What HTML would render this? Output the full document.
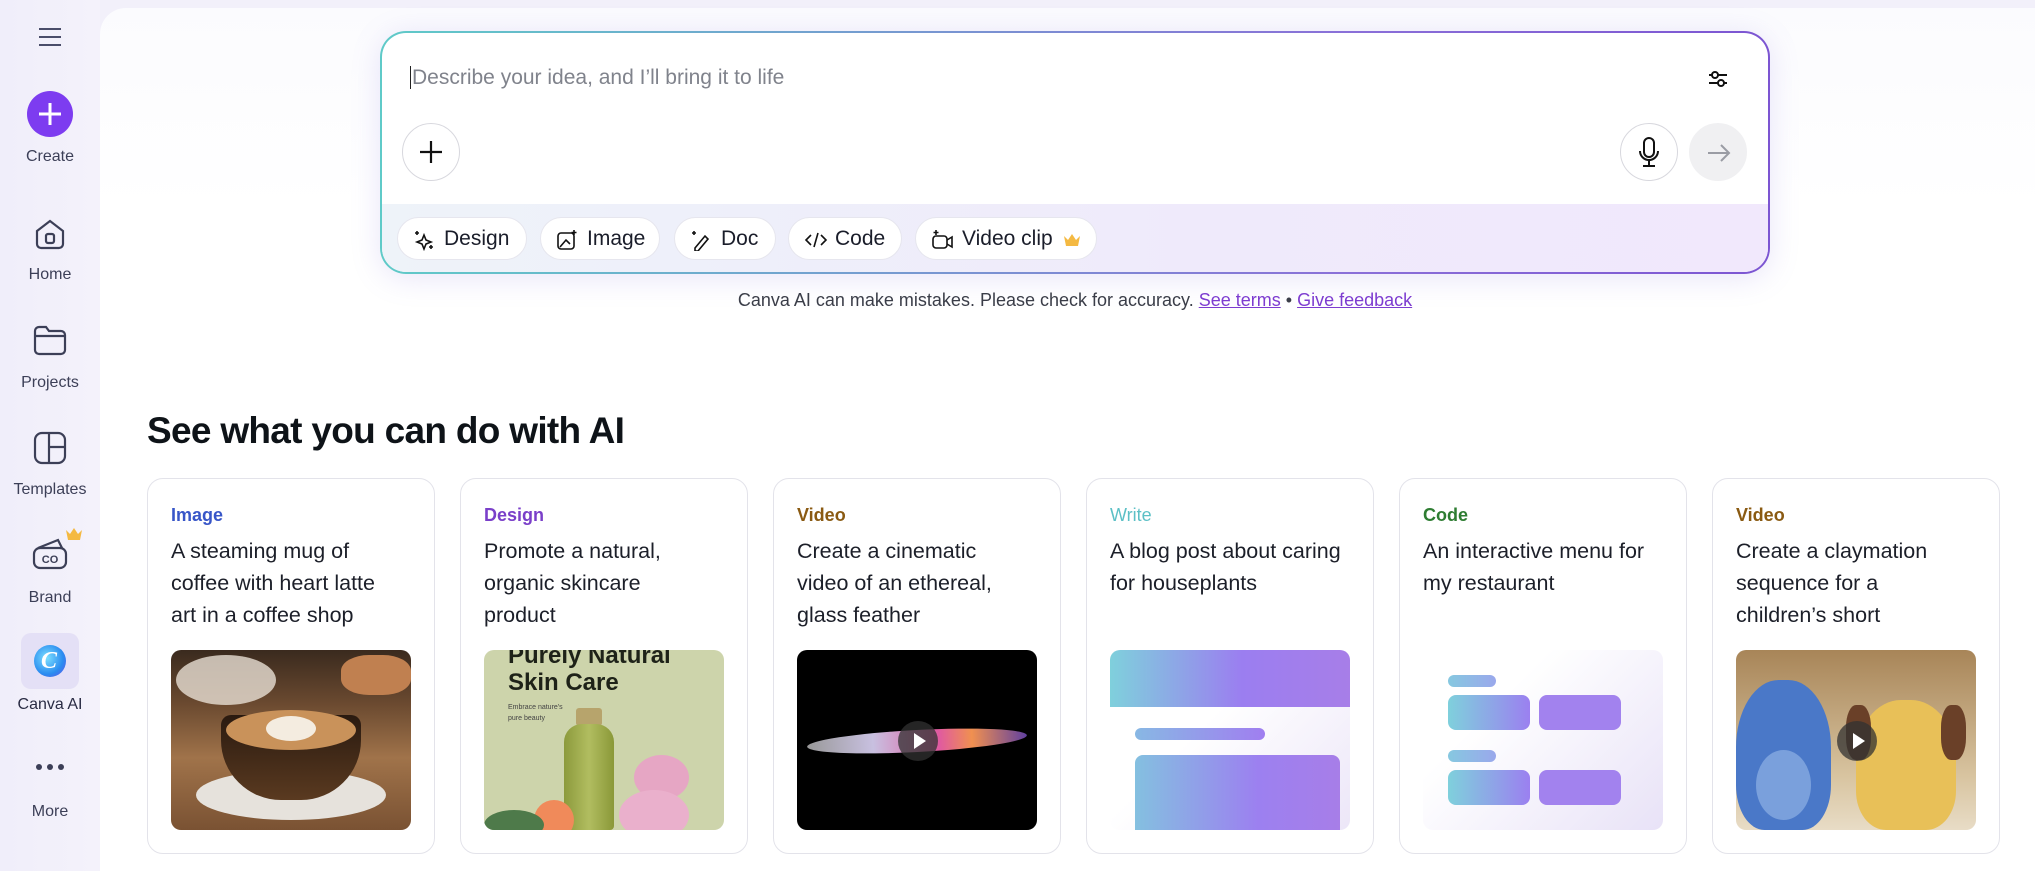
<!DOCTYPE html>
<html><head><meta charset="utf-8">
<style>
*{box-sizing:border-box;margin:0;padding:0}
body{width:2035px;height:871px;overflow:hidden;background:#f2f0fa;font-family:"Liberation Sans",sans-serif;color:#0e1318;position:relative}
.side{position:absolute;left:0;top:0;width:100px;height:871px;background:linear-gradient(90deg,#f0eefa,#f4f2fb)}
.nav{position:absolute;left:0;width:100px;text-align:center;font-size:16px;color:#3c3f57}
.ico{position:absolute;left:50%;transform:translateX(-50%)}
.main{position:absolute;left:100px;top:8px;width:1935px;height:863px;background:linear-gradient(180deg,#fbfbfe 0,#fff 200px);border-top-left-radius:26px}
.prompt{position:absolute;left:380px;top:31px;width:1390px;height:243px;border-radius:26px;padding:2px;background:linear-gradient(90deg,#5fcac8,#8a6fd8 70%,#7c55d2);box-shadow:0 4px 30px rgba(130,110,220,.18)}
.pin{position:absolute;inset:2px;border-radius:24px;background:#fff;overflow:hidden}
.chipbar{position:absolute;left:0;right:0;top:171px;bottom:0;background:linear-gradient(90deg,#eef3f9,#efeafb 60%,#f1e8fc)}
.chip{position:absolute;top:13px;height:43px;border-radius:22px;background:#fff;border:1px solid #e6e6ee;font-size:21px;line-height:41px;padding-left:46px;color:#1a1d2a}
.chip svg{position:absolute;left:15px;top:11px}
.circ{position:absolute;width:58px;height:58px;border-radius:50%;border:1px solid #d8d8de;background:#fff}
.card{position:absolute;top:478px;width:288px;height:376px;border:1px solid #e3e3ea;border-radius:16px;background:#fff}
.cat{position:absolute;left:23px;top:26px;font-size:18px;font-weight:bold}
.desc{position:absolute;left:23px;top:56px;width:232px;font-size:21.5px;line-height:32px;color:#1c1f29}
.img{position:absolute;left:23px;top:171px;width:240px;height:180px;border-radius:10px;overflow:hidden}
.play{position:absolute;left:101px;top:71px;width:40px;height:40px;border-radius:50%;background:rgba(50,50,50,.75)}
.play:after{content:"";position:absolute;left:16px;top:12px;border-left:12px solid #fff;border-top:8px solid transparent;border-bottom:8px solid transparent}
</style></head><body>
<div class="side">
  <svg class="ico" style="top:26px" width="26" height="22"><path d="M2 3h22M2 11h22M2 19h22" stroke="#4a4d6a" stroke-width="2"/></svg>
  <div class="ico" style="top:91px;width:46px;height:46px;border-radius:50%;background:#7d3cf0"><svg width="46" height="46"><path d="M23 12v22M12 23h22" stroke="#fff" stroke-width="3"/></svg></div>
  <div class="nav" style="top:148px">Create</div>
  <svg class="ico" style="top:216px" width="36" height="36" viewBox="0 0 36 36"><path d="M5 15l13-10 13 10v13a4 4 0 0 1-4 4H9a4 4 0 0 1-4-4z" fill="none" stroke="#3c3f57" stroke-width="2.2"/><rect x="14" y="18" width="8" height="9" rx="2" fill="none" stroke="#3c3f57" stroke-width="2.2"/></svg>
  <div class="nav" style="top:266px">Home</div>
  <svg class="ico" style="top:323px" width="36" height="34" viewBox="0 0 36 34"><path d="M3 8a4 4 0 0 1 4-4h7l3 4h12a4 4 0 0 1 4 4v15a4 4 0 0 1-4 4H7a4 4 0 0 1-4-4z M3 13h30" fill="none" stroke="#3c3f57" stroke-width="2.2"/></svg>
  <div class="nav" style="top:374px">Projects</div>
  <svg class="ico" style="top:430px" width="36" height="36" viewBox="0 0 36 36"><rect x="3" y="3" width="30" height="30" rx="7" fill="none" stroke="#3c3f57" stroke-width="2.2"/><path d="M17 3v30M17 17h16" stroke="#3c3f57" stroke-width="2.2"/></svg>
  <div class="nav" style="top:481px">Templates</div>
  <svg class="ico" style="top:527px;left:74px" width="18" height="14"><path d="M1 3l4 4 4-6 4 6 4-4-2 10H3z" fill="#f4b942"/></svg>
  <svg class="ico" style="top:536px" width="38" height="36" viewBox="0 0 38 36"><rect x="3" y="12" width="32" height="20" rx="6" fill="none" stroke="#3c3f57" stroke-width="2.2"/><path d="M7 12l20-8 4 8" fill="none" stroke="#3c3f57" stroke-width="2.2"/><text x="19" y="27" font-size="11" font-family="Liberation Sans" text-anchor="middle" fill="#3c3f57" font-weight="bold">CO</text></svg>
  <div class="nav" style="top:589px">Brand</div>
  <div class="ico" style="top:633px;width:58px;height:56px;border-radius:10px;background:#e4e0f6"></div>
  <div class="ico" style="top:645px;width:32px;height:32px;border-radius:50%;background:radial-gradient(circle at 40% 40%,#7de0ff,#2a8cf0 60%,#6a4ce8)"><div style="position:absolute;left:7px;top:3px;font:bold italic 24px 'Liberation Serif',serif;color:#fff">C</div></div>
  <div class="nav" style="top:696px;color:#2a2c44">Canva AI</div>
  <svg class="ico" style="top:763px" width="30" height="8"><circle cx="4" cy="4" r="3" fill="#3c3f57"/><circle cx="15" cy="4" r="3" fill="#3c3f57"/><circle cx="26" cy="4" r="3" fill="#3c3f57"/></svg>
  <div class="nav" style="top:803px">More</div>
</div>
<div class="main"></div>

<div class="prompt"><div class="pin">
  <div style="position:absolute;left:28px;top:33px;font-size:21px;color:#80838c"><span style="border-left:1.5px solid #222;margin-right:1px"></span>Describe your idea, and I’ll bring it to life</div>
  <svg style="position:absolute;left:1324px;top:34px" width="24" height="24" viewBox="0 0 24 24"><path d="M3 8h18M3 16h18" stroke="#111" stroke-width="2"/><circle cx="9" cy="8" r="3" fill="#fff" stroke="#111" stroke-width="2"/><circle cx="15" cy="16" r="3" fill="#fff" stroke="#111" stroke-width="2"/></svg>
  <div class="circ" style="left:20px;top:90px"><svg width="58" height="58"><path d="M28 17v22M17 28h22" stroke="#111" stroke-width="2.2"/></svg></div>
  <div class="circ" style="left:1238px;top:90px"><svg width="58" height="58"><rect x="23" y="14" width="10" height="19" rx="5" fill="none" stroke="#111" stroke-width="2"/><path d="M19 27a9 9 0 0 0 18 0M28 36v6M22 42h12" fill="none" stroke="#111" stroke-width="2"/></svg></div>
  <div class="circ" style="left:1307px;top:90px;background:#f0f0f2;border-color:#f0f0f2"><svg width="58" height="58"><path d="M18 29h21M31 21l8 8-8 8" fill="none" stroke="#9a9ca4" stroke-width="2"/></svg></div>
  <div class="chipbar">
    <div class="chip" style="left:15px;width:130px"><svg width="22" height="22"><path d="M11 6l2 5 5 2-5 2-2 5-2-5-5-2 5-2z M4 2v4M2 4h4 M18 16v4M16 18h4" fill="none" stroke="#111" stroke-width="1.6"/></svg>Design</div>
    <div class="chip" style="left:158px;width:120px"><svg width="22" height="22"><rect x="2" y="4" width="16" height="16" rx="3" fill="none" stroke="#111" stroke-width="1.6"/><path d="M4 18l6-7 4 4M18 1v5M15.5 3.5h5" fill="none" stroke="#111" stroke-width="1.6"/></svg>Image</div>
    <div class="chip" style="left:292px;width:102px"><svg width="22" height="22"><path d="M5 19l10-12 3 3-10 12H5z M2 4h4M4 2v4" fill="none" stroke="#111" stroke-width="1.6"/></svg>Doc</div>
    <div class="chip" style="left:406px;width:114px"><svg width="24" height="22"><path d="M7 6l-5 5 5 5M17 6l5 5-5 5M14 4l-4 14" fill="none" stroke="#111" stroke-width="1.6"/></svg>Code</div>
    <div class="chip" style="left:533px;width:182px"><svg width="24" height="22"><rect x="2" y="7" width="14" height="12" rx="3" fill="none" stroke="#111" stroke-width="1.6"/><path d="M16 11l5-3v10l-5-3M5 1v5M2.5 3.5h5" fill="none" stroke="#111" stroke-width="1.6"/></svg>Video clip <svg style="position:static;vertical-align:-2px;margin-left:4px" width="18" height="14"><path d="M1 3l4 4 4-6 4 6 4-4-2 10H3z" fill="#f4b942"/></svg></div>
  </div>
</div></div>

<div style="position:absolute;left:0;width:2150px;top:290px;text-align:center;font-size:18px;color:#3a3d48">Canva AI can make mistakes. Please check for accuracy. <span style="color:#7d3cd0;text-decoration:underline">See terms</span> • <span style="color:#7d3cd0;text-decoration:underline">Give feedback</span></div>

<div style="position:absolute;left:147px;top:410px;font-size:37px;font-weight:bold;letter-spacing:-0.7px;color:#0e1318">See what you can do with AI</div>

<div class="card" style="left:147px"><div class="cat" style="color:#3856c8">Image</div><div class="desc">A steaming mug of coffee with heart latte art in a coffee shop</div>
<div class="img" style="background:linear-gradient(180deg,#3a2a1e 0,#6b4a30 30%,#a0734a 60%,#7a5233)">
<div style="position:absolute;width:100px;height:50px;border-radius:50%;background:#e8e0d4;opacity:.8;left:5px;top:5px"></div>
<div style="position:absolute;left:170px;top:5px;width:70px;height:40px;border-radius:40%;background:#c08050"></div>
<div style="position:absolute;left:25px;top:120px;width:190px;height:50px;border-radius:50%;background:#e6e2dc"></div>
<div style="position:absolute;left:50px;top:65px;width:140px;height:85px;border-radius:10px 10px 60px 60px;background:linear-gradient(#2a1a10,#5a3a20)"></div>
<div style="position:absolute;left:55px;top:60px;width:130px;height:40px;border-radius:50%;background:#c9925a"></div>
<div style="position:absolute;left:95px;top:66px;width:50px;height:25px;border-radius:50%;background:#f4ece0"></div>
</div></div>

<div class="card" style="left:460px"><div class="cat" style="color:#7a3fc9">Design</div><div class="desc">Promote a natural, organic skincare product</div>
<div class="img" style="background:#cdd4ab"><div style="position:absolute;left:24px;top:-8px;font:bold 24px/27px 'Liberation Sans';color:#1e2218">Purely Natural<br>Skin Care</div><div style="position:absolute;left:24px;top:52px;font-size:7px;line-height:11px;color:#444">Embrace nature's<br>pure beauty</div>
<div style="position:absolute;left:92px;top:58px;width:26px;height:18px;background:#b7a46c;border-radius:3px"></div>
<div style="position:absolute;left:80px;top:74px;width:50px;height:106px;background:linear-gradient(90deg,#8c9a3c,#b1bd60,#8a9838);border-radius:18px 18px 4px 4px"></div>
<div style="position:absolute;left:150px;top:105px;width:55px;height:45px;border-radius:50%;background:#e6a6c4"></div>
<div style="position:absolute;left:135px;top:140px;width:70px;height:50px;border-radius:50%;background:#eab0cc"></div>
<div style="position:absolute;left:50px;top:150px;width:40px;height:40px;border-radius:50%;background:#f08a5a"></div>
<div style="position:absolute;left:0;top:160px;width:60px;height:30px;background:#4e7a4a;border-radius:50%"></div></div></div>

<div class="card" style="left:773px"><div class="cat" style="color:#8a5a12">Video</div><div class="desc">Create a cinematic video of an ethereal, glass feather</div>
<div class="img" style="background:#000"><div style="position:absolute;left:10px;top:80px;width:220px;height:22px;border-radius:50%;background:linear-gradient(90deg,#999,#c8c0e0 30%,#e05aa0 60%,#f09050 75%,#6040a0);transform:rotate(-3deg)"></div><div class="play"></div></div></div>

<div class="card" style="left:1086px"><div class="cat" style="color:#5cc0c6;font-weight:normal">Write</div><div class="desc">A blog post about caring for houseplants</div>
<div class="img" style="background:linear-gradient(135deg,#fff 40%,#ece6f8)"><div style="position:absolute;left:0;top:0;width:240px;height:57px;background:linear-gradient(90deg,#7fd0dc,#9b7ef0 55%,#a77ee8)"></div><div style="position:absolute;left:25px;top:78px;width:130px;height:12px;border-radius:6px;background:linear-gradient(90deg,#88b8e4,#a07ef0)"></div><div style="position:absolute;left:25px;top:105px;width:205px;height:75px;border-radius:8px 8px 0 0;background:linear-gradient(90deg,#84c0e0,#9c80f0 60%,#a77ee8)"></div></div></div>

<div class="card" style="left:1399px"><div class="cat" style="color:#2e7d32">Code</div><div class="desc">An interactive menu for my restaurant</div>
<div class="img" style="background:linear-gradient(135deg,#fff 30%,#e8e2f7)"><div style="position:absolute;left:25px;top:25px;width:48px;height:12px;border-radius:6px;background:linear-gradient(90deg,#86c8e0,#9aa8ec)"></div><div style="position:absolute;left:25px;top:45px;width:82px;height:35px;border-radius:8px;background:linear-gradient(90deg,#7fd0dc,#9b80f0)"></div><div style="position:absolute;left:116px;top:45px;width:82px;height:35px;border-radius:8px;background:#a282ee"></div><div style="position:absolute;left:25px;top:100px;width:48px;height:12px;border-radius:6px;background:linear-gradient(90deg,#86c8e0,#9aa8ec)"></div><div style="position:absolute;left:25px;top:120px;width:82px;height:35px;border-radius:8px;background:linear-gradient(90deg,#7fd0dc,#9b80f0)"></div><div style="position:absolute;left:116px;top:120px;width:82px;height:35px;border-radius:8px;background:#a282ee"></div></div></div>

<div class="card" style="left:1712px"><div class="cat" style="color:#8a5a12">Video</div><div class="desc">Create a claymation sequence for a children’s short</div>
<div class="img" style="background:linear-gradient(180deg,#a88558,#d8c4a0 70%,#e8dcc6)"><div style="position:absolute;left:0;top:30px;width:95px;height:150px;border-radius:45% 45% 30% 30%;background:#4a78c8"></div><div style="position:absolute;left:20px;top:100px;width:55px;height:70px;border-radius:50%;background:#7aa0dc"></div><div style="position:absolute;left:120px;top:50px;width:100px;height:130px;border-radius:45% 45% 30% 30%;background:#e8c058"></div><div style="position:absolute;left:110px;top:55px;width:25px;height:55px;border-radius:40%;background:#6a4028"></div><div style="position:absolute;left:205px;top:55px;width:25px;height:55px;border-radius:40%;background:#6a4028"></div><div class="play"></div></div></div>
</body></html>
